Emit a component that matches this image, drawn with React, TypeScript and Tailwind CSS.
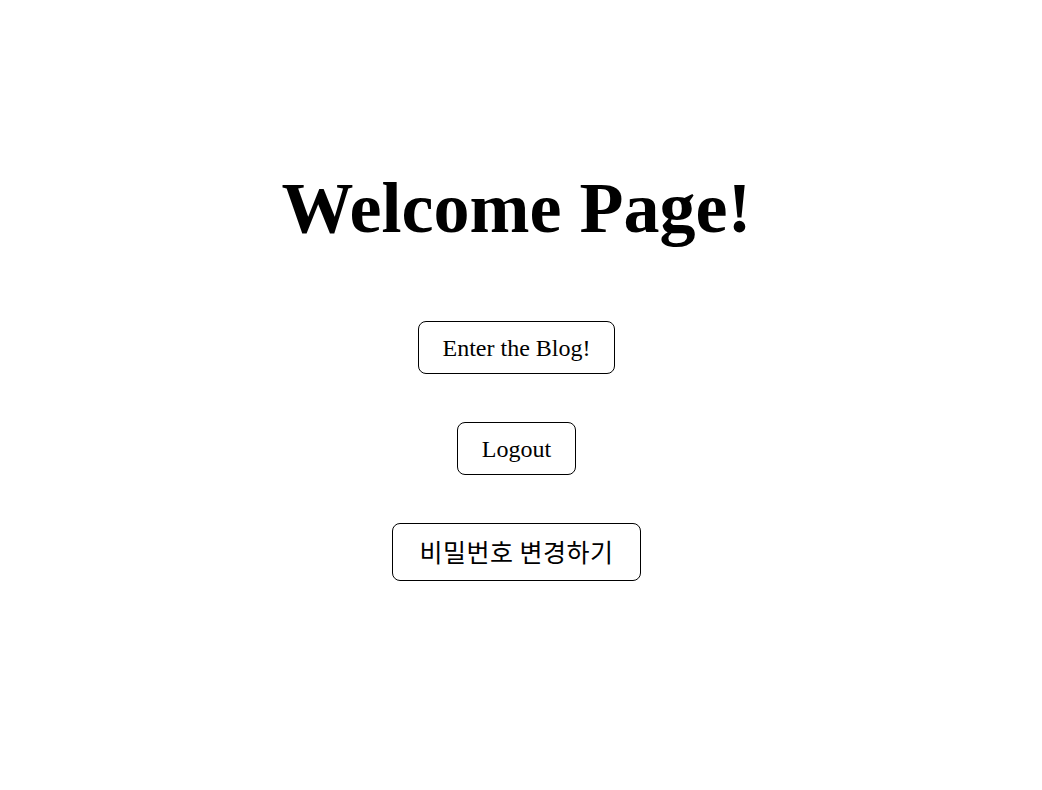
export default function App() {
  return (
    <div className="min-h-[790px] bg-white flex flex-col items-center pr-[9px] pt-[160px] text-black">
      <h1 className="font-['Liberation_Serif',serif] font-bold text-[72px] leading-[96px]">Welcome Page!</h1>
      <div className="mt-[65px] flex flex-col items-center gap-[48px]">
        <button className="h-[53px] px-6 border border-black rounded-lg bg-white font-['Liberation_Serif',serif] text-[24px]">
          Enter the Blog!
        </button>
        <button className="h-[53px] px-6 border border-black rounded-lg bg-white font-['Liberation_Serif',serif] text-[24px]">
          Logout
        </button>
        <button className="h-[58px] px-[26px] border border-black rounded-lg bg-white font-['Noto_Sans_CJK_KR',sans-serif] text-[25px] tracking-[0.5px]">
          비밀번호 변경하기
        </button>
      </div>
    </div>
  )
}
